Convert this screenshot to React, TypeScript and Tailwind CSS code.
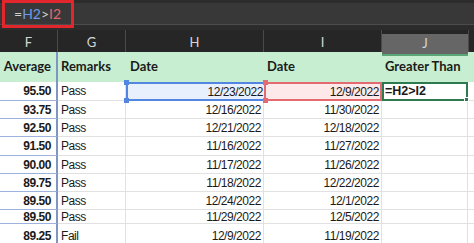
import React from 'react';

const rows = [
  { avg: '95.50', remark: 'Pass', d1: '12/23/2022', d2: '12/9/2022', h: 'h-[19px]' },
  { avg: '93.75', remark: 'Pass', d1: '12/16/2022', d2: '11/30/2022', h: 'h-[18px]' },
  { avg: '92.50', remark: 'Pass', d1: '12/21/2022', d2: '12/18/2022', h: 'h-[18px]' },
  { avg: '91.50', remark: 'Pass', d1: '11/16/2022', d2: '11/27/2022', h: 'h-[19px]' },
  { avg: '90.00', remark: 'Pass', d1: '11/17/2022', d2: '11/26/2022', h: 'h-[18px]' },
  { avg: '89.75', remark: 'Pass', d1: '11/18/2022', d2: '12/22/2022', h: 'h-[18px]' },
  { avg: '89.50', remark: 'Pass', d1: '12/24/2022', d2: '12/1/2022', h: 'h-[18px]' },
  { avg: '89.50', remark: 'Pass', d1: '11/29/2022', d2: '12/5/2022', h: 'h-[14px]' },
  { avg: '89.25', remark: 'Fail', d1: '12/9/2022', d2: '11/19/2022', h: 'h-[26px] pb-[2px]' },
];

const sans = { fontFamily: '"Liberation Sans", Arial, sans-serif' };
const head = { fontFamily: 'Lato, "Open Sans", sans-serif' };

export default function App() {
  return (
    <div className="w-[474px] h-[243px] overflow-hidden bg-white relative" style={sans}>
      {/* formula bar */}
      <div className="h-[30px] bg-[#2c2c2c] pt-[3px] flex flex-col">
        <div className="h-[22px] bg-[#383838] border-b border-[#4c4c4c] flex items-center pl-[14px] text-[14px]" style={head}>
          <span className="text-[#cfcfcf]">=</span>
          <span className="text-[#6e9be8]">H2</span>
          <span className="text-[#cfcfcf]">&gt;</span>
          <span className="text-[#e06a70]">I2</span>
        </div>
      </div>
      <div className="absolute left-[2px] top-0 w-[72px] h-[28px] border-[3px] border-[#e3262b]" />

      {/* column letters */}
      <div className="h-[22px] bg-[#262626] flex text-[13px] text-[#d6d6d6]" style={head}>
        <div className="w-[58px] border-r border-[#4a4a4a] flex items-center justify-center pt-[3px]">F</div>
        <div className="w-[68px] border-r border-[#4a4a4a] flex items-center justify-center pt-[3px]">G</div>
        <div className="w-[138px] border-r border-[#4a4a4a] flex items-center justify-center pt-[3px]">H</div>
        <div className="w-[118px] border-r border-[#4a4a4a] flex items-center justify-center pt-[3px]">I</div>
        <div className="w-[86px] pt-[4px] flex flex-col">
          <div className="flex-1 bg-[#666666] border-b-2 border-[#5aa676] flex items-center justify-center">J</div>
        </div>
        <div className="flex-1 border-l border-[#4a4a4a]" />
      </div>

      {/* header row */}
      <div className="h-[30px] bg-[#c7eed1] flex items-center text-[13px] font-bold text-[#1b1b1b]" style={head}>
        <div className="w-[58px] h-full border-r-2 border-[#7f96c2] flex items-center justify-end pr-[5px] whitespace-nowrap">Average</div>
        <div className="w-[68px] h-full flex items-center pl-[3px]">Remarks</div>
        <div className="w-[138px] h-full flex items-center pl-[4px]">Date</div>
        <div className="w-[118px] h-full flex items-center pl-[3px]">Date</div>
        <div className="w-[86px] h-full flex items-center pl-[3px] whitespace-nowrap">Greater Than</div>
        <div className="flex-1" />
      </div>

      {/* data rows */}
      {rows.map((r, i) => (
        <div key={i} className={`${r.h} flex text-[12px] tracking-[-0.45px] text-[#1a1a1a]`}>
          <div className="w-[58px] border-r-2 border-b border-r-[#7f96c2] border-b-[#9db2dc] flex items-center justify-end pr-[5px] font-bold">
            {r.avg}
          </div>
          <div className="w-[68px] border-r border-b border-[#e1e1e1] flex items-center pl-[3px]">{r.remark}</div>
          {i === 0 ? (
            <div className="w-[138px] relative bg-[#e9f0fd] border-y-2 border-l-2 border-[#5286e0] flex items-center justify-end pr-[1px]">
              {r.d1}
              <div className="absolute left-[-4px] top-[-4px] w-[5px] h-[5px] bg-[#5286e0]" />
              <div className="absolute left-[-4px] bottom-[-4px] w-[5px] h-[5px] bg-[#5286e0]" />
            </div>
          ) : (
            <div className="w-[138px] border-r border-b border-[#e1e1e1] flex items-center justify-end pr-[2px]">{r.d1}</div>
          )}
          {i === 0 ? (
            <div className="w-[118px] relative bg-[#fde9ea] border-2 border-[#e46a72] flex items-center justify-end pr-[1px]">
              {r.d2}
              <div className="absolute left-[-3px] top-[-4px] w-[5px] h-[5px] bg-[#e46a72]" />
              <div className="absolute left-[-3px] bottom-[-4px] w-[5px] h-[5px] bg-[#e46a72]" />
            </div>
          ) : (
            <div className="w-[118px] border-r border-b border-[#e1e1e1] flex items-center justify-end pr-[2px]">{r.d2}</div>
          )}
          {i === 0 ? (
            <div className="w-[86px] relative border-2 border-[#2c7a4f] flex items-center pl-[1px] font-bold tracking-[0px] text-[12.5px]">
              =H2&gt;I2
              <div className="absolute right-[-3px] bottom-[-3px] w-[5px] h-[5px] bg-[#2c7a4f] border border-white" />
            </div>
          ) : (
            <div className="w-[86px] border-r border-b border-[#e1e1e1]" />
          )}
          <div className="flex-1 border-b border-[#e1e1e1]" />
        </div>
      ))}
    </div>
  );
}
